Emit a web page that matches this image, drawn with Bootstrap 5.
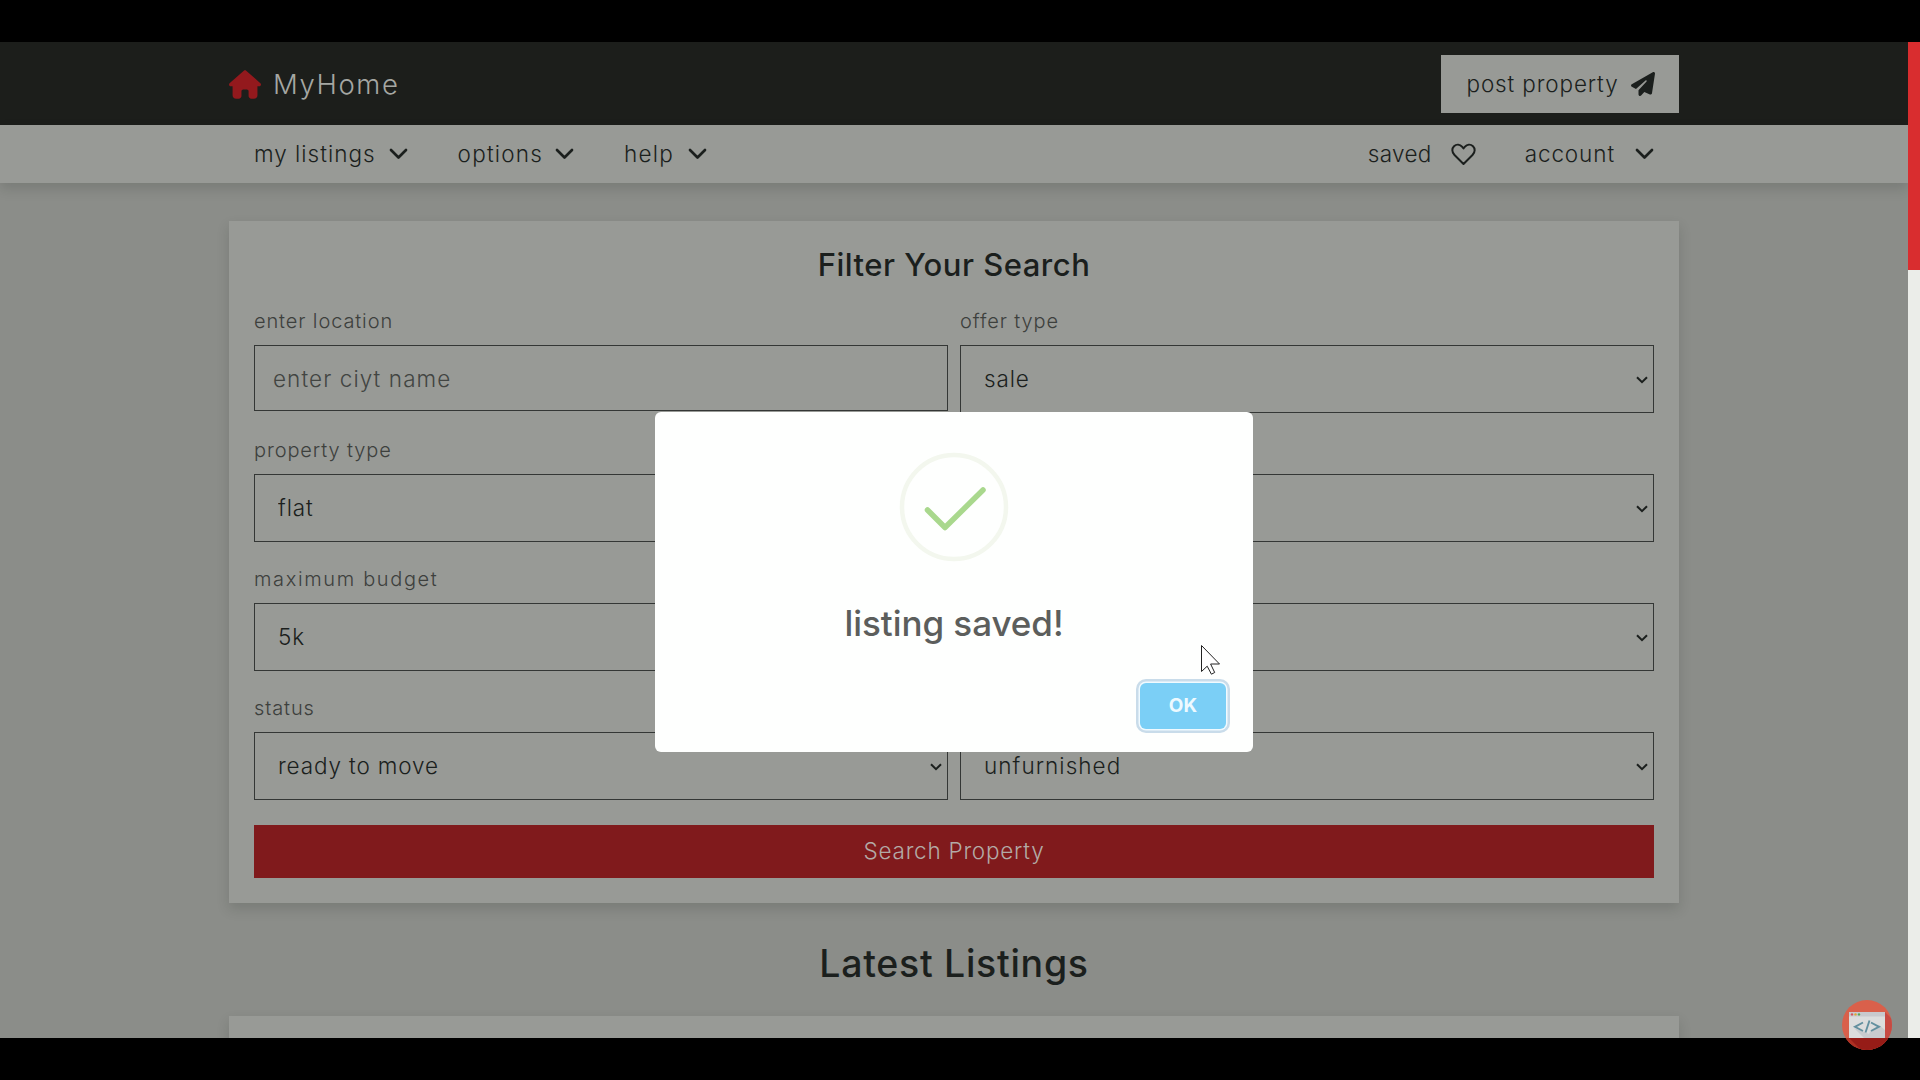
<!DOCTYPE html>
<html lang="en">
<head>
<meta charset="utf-8">
<title>MyHome</title>
<link rel="stylesheet" href="https://cdn.jsdelivr.net/npm/bootstrap@5.3.0/dist/css/bootstrap.min.css">
<style>
:root { --ink:#1b1f1d; --panel:#989a96; --page:#8b8d89; --red:#801a1c; --shade:0 6px 12px rgba(20,24,20,.15); }
body { background:#000; width:1920px; height:1080px; overflow:hidden; font-family:Inter,"Open Sans",sans-serif; font-weight:300; font-size:22.5px; color:var(--ink); font-feature-settings:"calt" 0; }
.stage { height:996px; margin-top:42px; overflow:hidden; }
.site { width:1908px; background:var(--page); overflow:hidden; }
.scroll-track { width:12px; background:#ebede9; }
.scroll-thumb { height:228px; background:#d92d2f; }
.wrap { width:1450px; margin:0 auto; }
.topbar { height:83px; background:#1c1e1b; }
.topbar .wrap, .menubar .wrap { height:100%; }
.brand { font-size:27.5px; letter-spacing:1.6px; color:#a5a7a3; gap:12px; padding-top:2px; }
.brand svg { margin-top:-1px; }
.post { width:238px; height:58px; background:var(--panel); padding-left:25.500px; gap:12px; letter-spacing:.86px; color:var(--ink); }
.menubar { height:58px; background:var(--panel); box-shadow:var(--shade); position:relative; padding:0; }
.menubar .wrap { padding:0 25px; }
.ls-a { letter-spacing:1px; }
.ls-b { letter-spacing:1.2px; }
.panel { background:var(--panel); box-shadow:var(--shade); }
.filter { margin-top:38px; height:682px; padding:24px 25px 25px; }
.filter h3 { font-size:31px; line-height:40px; font-weight:450; letter-spacing:.5px; margin-bottom:23px; }
.fields { display:grid; grid-template-columns:694px 694px; column-gap:12px; row-gap:24px; }
.fields label { display:block; font-size:20px; line-height:27px; margin-bottom:10px; letter-spacing:.88px; color:#3d403d; }
.fields .form-control, .fields .form-select { height:68px; border:1px solid #343735; border-radius:0; background-color:transparent; font-size:22.5px; font-weight:300; color:var(--ink); letter-spacing:.87px; padding:0 23px; }
.fields .form-control { height:66px; padding:0 18px; letter-spacing:1.08px; }
.fields .form-control::placeholder { color:#424542; opacity:1; }
.fields .form-select { background-image:url("data:image/svg+xml,%3Csvg xmlns='http://www.w3.org/2000/svg' viewBox='0 0 12 8'%3E%3Cpath d='M1 1.2 6 6.2 11 1.2' fill='none' stroke='%231b1f1d' stroke-width='2'/%3E%3C/svg%3E"); background-size:12px 8px; background-position:right 5px top 30px; }
.go { height:53px; margin-top:25px; background:var(--red); color:#b3aaa6; border:0; border-radius:0; font-size:22.5px; font-weight:300; letter-spacing:.75px; padding:0 0 1px; }
.latest { font-size:37.5px; line-height:50px; font-weight:450; letter-spacing:.7px; margin:36px 0 27px; }
.saved-box { position:absolute; left:655px; top:412px; width:598px; height:340px; background:#fefffe; border-radius:6px; padding:40px 24px 20px; }
.saved-box .tick { display:block; margin:0 auto; }
.saved-box h2 { font-size:35px; line-height:46px; font-weight:450; color:#5c5e5c; margin:38px 0 0; letter-spacing:-.05px; }
.ok { width:86px; height:46px; margin-top:37px; margin-left:auto; margin-right:3px; padding:0; background:#7bcff6; color:#eefaff; border:0; border-radius:6px; font-size:19px; line-height:46px; font-weight:700; box-shadow:0 0 0 1.500px #f0faff,0 0 0 4px #c9dcea; }
.pointer { position:absolute; left:1200px; top:643px; }
.watermark { position:absolute; left:1842px; top:1000px; }
</style>
<script src="https://cdn.jsdelivr.net/npm/bootstrap@5.3.0/dist/js/bootstrap.bundle.min.js"></script>
</head>
<body>
<div class="stage d-flex">
  <div class="site">
    <header>
      <div class="topbar">
        <div class="wrap d-flex align-items-center justify-content-between">
          <a class="brand d-flex align-items-center text-decoration-none" href="#">
            <svg width="32" height="29" viewBox="0 0 576 512" fill="#93191d"><path d="M575.800 255.500c0 18-15 32.100-32 32.100h-32l.7 160.200c0 35.300-28 64.200-63 64.200h-48c-28 0-49-22-49-48v-88c0-17.700-14.300-32-32-32h-64c-17.700 0-32 14.300-32 32v88c0 26-21 48-49 48h-48c-35 0-63-28.900-63-64.200V287.600H32c-18 0-32-14-32-32.100 0-9 3-17 10-24L266.400 8c7-7 15-8 22-8s15 2 21 7l255.400 224.500c8 7 12 15 11 24z"/></svg>
            <span>MyHome</span>
          </a>
          <a class="post d-flex align-items-center text-decoration-none" href="#">
            <span>post property</span>
            <svg width="24" height="24" viewBox="0 0 512 512" fill="#1b1f1d"><path d="M498.100 5.600c10.100 7 15.400 19.100 13.500 31.200l-64 416c-1.500 9.700-7.400 18.200-16 23s-18.900 5.400-28 1.600L284 427.700l-68.500 74.100c-8.900 9.700-22.900 12.900-35.200 8.100S160 493.200 160 480v-83.600c0-4 1.500-7.800 4.200-10.700l167.600-182.900c5.800-6.300 5.600-16-.4-22s-15.700-6.400-22-.7L106 360.800 17.700 316.600C7.100 311.300.3 300.700 0 288.900s5.900-22.800 16.100-28.700l448-256c10.700-6.100 23.900-5.500 34 1.400z"/></svg>
          </a>
        </div>
      </div>
      <nav class="menubar">
        <div class="wrap d-flex align-items-center justify-content-between">
          <div class="d-flex align-items-center" style="gap:50px">
            <span class="d-flex align-items-center ls-a" style="gap:13px">my listings <svg width="19" height="12" viewBox="0 0 19 12"><path d="M2 2l7.500 7.500L17 2" fill="none" stroke="#1b1f1d" stroke-width="2.700" stroke-linecap="round" stroke-linejoin="round"/></svg></span>
            <span class="d-flex align-items-center ls-b" style="gap:12px">options <svg width="19" height="12" viewBox="0 0 19 12"><path d="M2 2l7.500 7.500L17 2" fill="none" stroke="#1b1f1d" stroke-width="2.700" stroke-linecap="round" stroke-linejoin="round"/></svg></span>
            <span class="d-flex align-items-center ls-b" style="gap:14px">help <svg width="19" height="12" viewBox="0 0 19 12"><path d="M2 2l7.500 7.500L17 2" fill="none" stroke="#1b1f1d" stroke-width="2.700" stroke-linecap="round" stroke-linejoin="round"/></svg></span>
          </div>
          <div class="d-flex align-items-center" style="gap:49px">
            <span class="d-flex align-items-center" style="gap:19px;letter-spacing:.3px">saved <svg width="25" height="23" viewBox="0 0 25 23"><path d="M12.500 21 3.500 12C.6 9 .8 5.300 3 3.200c2.600-2.300 6-1.700 8 .5l1.500 1.700L14 3.700c2-2.200 5.400-2.800 8-.5 2.200 2.100 2.400 5.800-.5 8.800z" fill="none" stroke="#1b1f1d" stroke-width="2" stroke-linejoin="round"/></svg></span>
            <span class="d-flex align-items-center" style="gap:20px;letter-spacing:.9px">account <svg width="19" height="12" viewBox="0 0 19 12"><path d="M2 2l7.500 7.500L17 2" fill="none" stroke="#1b1f1d" stroke-width="2.700" stroke-linecap="round" stroke-linejoin="round"/></svg></span>
          </div>
        </div>
      </nav>
    </header>
    <main class="wrap">
      <form class="panel filter">
        <h3 class="text-center">Filter Your Search</h3>
        <div class="fields">
          <div><label>enter location</label><input class="form-control" placeholder="enter ciyt name"></div>
          <div><label>offer type</label><select class="form-select"><option>sale</option></select></div>
          <div><label>property type</label><select class="form-select"><option>flat</option></select></div>
          <div><label>&nbsp;</label><select class="form-select" aria-label="bedrooms"><option></option></select></div>
          <div><label style="letter-spacing:1.640px">maximum budget</label><select class="form-select"><option>5k</option></select></div>
          <div><label>&nbsp;</label><select class="form-select" aria-label="deposit"><option></option></select></div>
          <div><label>status</label><select class="form-select"><option>ready to move</option></select></div>
          <div><label>&nbsp;</label><select class="form-select" aria-label="furnished" style="letter-spacing:1.050px"><option>unfurnished</option></select></div>
        </div>
        <button type="button" class="btn go w-100 d-block">Search Property</button>
      </form>
      <h1 class="latest text-center">Latest Listings</h1>
      <div class="panel" style="height:120px"></div>
    </main>
  </div>
  <div class="scroll-track"><div class="scroll-thumb"></div></div>
</div>

<div class="saved-box" role="dialog">
  <svg class="tick" width="110" height="110" viewBox="0 0 110 110"><circle cx="55" cy="55" r="52" fill="none" stroke="#f3f7ee" stroke-width="4.500"/><path d="M28.500 58 46 75.500 84 38" fill="none" stroke="#a9d88d" stroke-width="5.500" stroke-linecap="round" stroke-linejoin="round"/></svg>
  <h2 class="text-center">listing saved!</h2>
  <button class="btn ok d-block">OK</button>
</div>

<svg class="pointer" width="22" height="33" viewBox="0 0 22 33"><path d="M1.500 2.500V28.500l5.700-5.300 4.200 8 3.300-1.700-4.100-8.500H19.500z" fill="#fff" stroke="#222" stroke-width="1"/></svg>

<svg class="watermark" width="50" height="50" viewBox="0 0 50 50">
  <defs><clipPath id="disc"><circle cx="25" cy="25" r="25"/></clipPath></defs>
  <g clip-path="url(#disc)">
    <rect width="50" height="50" fill="#d9604b"/>
    <path d="M43 12 50 19V38H43z" fill="#c74a43"/>
    <rect y="38" width="50" height="12" fill="#ae2f22"/>
    <path d="M7 38H50V50H19z" fill="#961c17"/>
    <rect x="7" y="12" width="36" height="26" fill="#dcdddd"/>
    <rect x="7" y="12" width="36" height="4.500" fill="#c8c9cd"/>
    <path d="M12 28 22 38H43V30L37 25 29 30 27 34 20 31z" fill="#c9cbce"/>
    <circle cx="10" cy="14.400" r="1.200" fill="#d4555c"/><circle cx="13.500" cy="14.400" r="1.200" fill="#e0a632"/><circle cx="17" cy="14.400" r="1.200" fill="#58a659"/>
    <path d="M21 22.500 13 26.800 21 31M29 22.500 37 26.800 29 31M27.500 20.500 23.500 32.500" fill="none" stroke="#63909f" stroke-width="1.900"/>
  </g>
</svg>
</body>
</html>
